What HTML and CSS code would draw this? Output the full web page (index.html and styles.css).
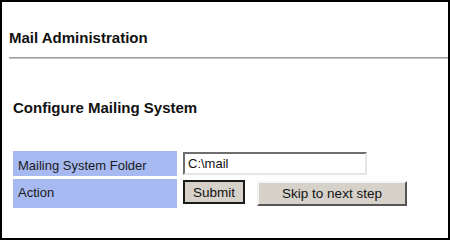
FILE: index.html
```html
<!DOCTYPE html>
<html>

<head>
    <meta charset="utf-8">
    <title>Mail Administration</title>
    <link rel="stylesheet" href="styles.css">
</head>

<body>
    <div class="frame">
        <div class="page-title">Mail Administration</div>
        <div class="rule"></div>
        <div class="section-title">Configure Mailing System</div>
        <div class="settings">
            <div class="label row-folder">Mailing System Folder</div>
            <div class="field row-folder">
                <input type="text" class="text-input" value="C:\mail">
            </div>
            <div class="label row-action">Action</div>
            <div class="field row-action">
                <input type="button" class="button default" value="Submit">
                <input type="button" class="button skip" value="Skip to next step">
            </div>
        </div>
    </div>
</body>

</html>
```

FILE: styles.css
```css
body {
    margin: 0;
    background-color: #ffffff;
    font-family: "Liberation Sans", Arial, sans-serif;
}

.frame {
    box-sizing: border-box;
    width: 450px;
    height: 240px;
    border: 2px solid #000000;
    padding: 0 0 0 7px;
}

.page-title {
    margin-top: 28px;
    font-size: 15px;
    font-weight: bold;
    color: #111111;
    line-height: 16px;
}

.rule {
    margin-top: 11px;
    height: 1px;
    background-color: #9a9a9a;
    border-bottom: 1px solid #c8c8c8;
}

.section-title {
    margin-top: 40px;
    margin-left: 4px;
    font-size: 15px;
    font-weight: bold;
    color: #111111;
    line-height: 18px;
}

.settings {
    display: grid;
    grid-template-columns: 164px auto;
    grid-template-rows: 25px 29px;
    column-gap: 6px;
    row-gap: 3px;
    margin-top: 34px;
    margin-left: 4px;
}

.label {
    background-color: #a6b9f1;
    padding-left: 5px;
    font-size: 13px;
    color: #1a1a1a;
}

.label.row-folder {
    line-height: 29px;
}

.label.row-action {
    line-height: 27px;
}

.field {
    display: flex;
    align-items: flex-start;
}

.text-input {
    box-sizing: border-box;
    width: 184px;
    height: 23px;
    margin: 1px 0 0 0;
    padding: 0 0 0 3px;
    border: 2px solid;
    border-color: #6e6e6e #e6e6e6 #e6e6e6 #6e6e6e;
    font-family: "Liberation Sans", Arial, sans-serif;
    font-size: 13px;
    color: #111111;
}

.button {
    box-sizing: border-box;
    margin: 1px 0 0 0;
    padding: 0;
    background-color: #d6d2ca;
    border: 2px solid;
    border-color: #f4f4f4 #555555 #555555 #f4f4f4;
    font-family: "Liberation Sans", Arial, sans-serif;
    font-size: 13.5px;
    color: #111111;
}

.button.default {
    width: 62px;
    height: 24px;
    border: 2px solid #1a1a1a;
}

.button.skip {
    width: 150px;
    height: 25px;
    margin-left: 12px;
    margin-top: 2px;
}
```
